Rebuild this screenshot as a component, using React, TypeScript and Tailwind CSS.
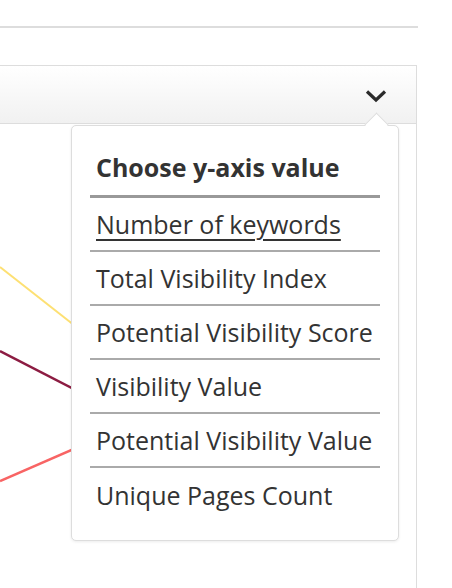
const options = [
  'Number of keywords',
  'Total Visibility Index',
  'Potential Visibility Score',
  'Visibility Value',
  'Potential Visibility Value',
  'Unique Pages Count',
]

export default function App() {
  return (
    <div
      className="relative w-[452px] h-[588px] overflow-hidden bg-white text-[#333]"
      style={{ fontFamily: '"Open Sans", "Noto Sans", sans-serif' }}
    >
      <div className="mt-[26px] h-[2px] w-[418px] bg-[#ddd]" />

      <div className="mt-[37px] w-[417px] border border-l-0 border-[#ddd]">
        <div className="flex h-[58px] items-center justify-end border-b border-[#ddd] bg-gradient-to-b from-white to-[#f1f1f1] pr-[29px]">
          <svg width="22" height="15" viewBox="0 0 22 15" className="mt-[2px]">
            <polyline points="2,3.5 11,12 20,3.5" fill="none" stroke="#2b2b2b" strokeWidth="3.2" />
          </svg>
        </div>
        <div className="h-[470px]">
          <svg width="416" height="470" className="block">
            <line x1="0" y1="143" x2="200" y2="300" stroke="#fde073" strokeWidth="2" />
            <line x1="0" y1="227" x2="200" y2="330" stroke="#8c1c42" strokeWidth="2.5" />
            <line x1="0" y1="357" x2="200" y2="270" stroke="#f86464" strokeWidth="2.5" />
          </svg>
        </div>
      </div>

      <div className="absolute left-[71px] top-[125px] w-[328px] rounded-[5px] border border-[#ddd] bg-white px-[18px] pt-[25px] pb-[18px] shadow-[0_1px_3px_rgba(0,0,0,0.08)]">
        <div className="absolute left-[296px] top-[-10px] h-[17px] w-[17px] rotate-45 border-l border-t border-[#ddd] bg-white" />
        <div className="border-b-[3px] border-[#999] pb-[12px] pl-[6px] text-[25px] font-bold leading-[32px]">
          Choose y-axis value
        </div>
        {options.map((o, i) => (
          <div
            key={o}
            className={
              'flex h-[54px] items-center pl-[6px] text-[25px] leading-[32px] ' +
              (i < options.length - 1 ? 'border-b-2 border-[#aaa]' : '')
            }
          >
            <span className={i === 0 ? 'underline decoration-[2px] underline-offset-[5px]' : ''}>{o}</span>
          </div>
        ))}
      </div>
    </div>
  )
}
